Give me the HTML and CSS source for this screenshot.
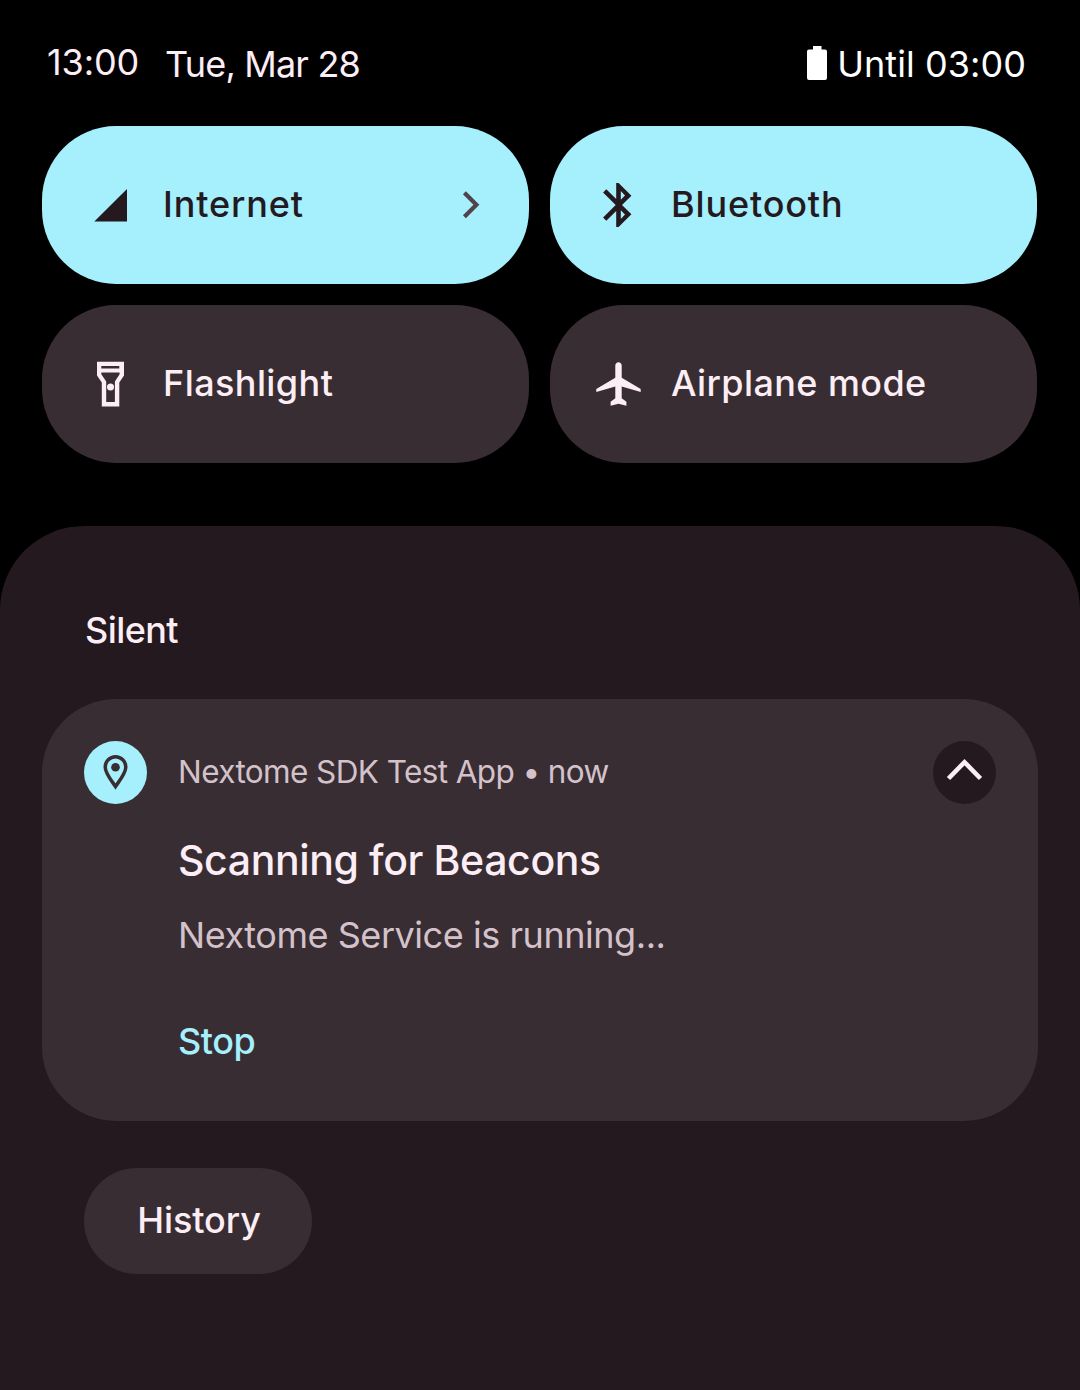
FILE: index.html
```html
<!DOCTYPE html>
<html lang="en">
<head>
<meta charset="utf-8">
<title>Notification shade</title>
<link rel="stylesheet" href="styles.css">
</head>
<body>
<main class="shade">
  <header class="status">
    <span class="clock">13:00</span>
    <span class="date">Tue, Mar 28</span>
    <svg class="battery" width="20" height="34" viewBox="0 0 20 34"><path fill="#fff" d="M6 0h8.500v3.600H18a2 2 0 0 1 2 2V32a2 2 0 0 1-2 2H2a2 2 0 0 1-2-2V5.600a2 2 0 0 1 2-2h4z"/></svg>
    <span class="until">Until 03:00</span>
  </header>

  <section class="tiles">
    <div class="tile on">
      <svg class="tile-icon" viewBox="0 0 48 48"><path fill="currentColor" d="M8.300 40.600 41 8v32.600z"/></svg>
      <span class="label internet">Internet</span>
      <svg class="more" width="20" height="30" viewBox="0 0 20 30"><path fill="none" stroke="#50434a" stroke-width="4.200" d="M3.400 2.700 15.400 14.700 3.400 26.700"/></svg>
    </div>
    <div class="tile on">
      <svg class="tile-icon" viewBox="0 0 48 48"><path fill="currentColor" fill-rule="evenodd" d="M22.200 2h2.400L37.400 14.700 28 24 37.400 33.300 24.600 46h-2.400V29.900L12.300 39.800 9.100 36.600 21.700 24 9.100 11.400l3.200-3.200 9.900 9.900zM26.800 10.100v8.600l4.200-4.200zM26.800 29.300v8.600l4.200-4.400z"/></svg>
      <span class="label bluetooth">Bluetooth</span>
    </div>
    <div class="tile">
      <svg class="tile-icon" viewBox="0 0 48 48"><path fill="currentColor" fill-rule="evenodd" d="M11 1.700h27V15.400l-4.700 7.200V46.400H15.800V22.600L11 15.400zM15.300 6.100v2.300h18V6.100zM15.300 12.400v1.800l4.900 7.300V41.900h8.700V21.500l4.700-7.300v-1.800z"/><circle cx="24.500" cy="27" r="3.500" fill="currentColor"/></svg>
      <span class="label flashlight">Flashlight</span>
    </div>
    <div class="tile">
      <svg class="tile-icon" viewBox="0 0 48 48"><path fill="currentColor" d="M24.500 2.300c1.800 0 3.200 1.400 3.200 3.200v12.200l19 11.300v3.100l-19-5.600V38.300l4.700 3.400v4l-7.900-2-7.900 2v-4l4.700-3.400V26.500l-19 5.600V29l19-11.300V5.500c0-1.800 1.400-3.200 3.200-3.200z"/></svg>
      <span class="label airplane">Airplane mode</span>
    </div>
  </section>

  <section class="panel">
    <h2 class="group">Silent</h2>
    <article class="card">
      <div class="badge">
        <svg width="63" height="63" viewBox="0 0 63 63"><path fill="none" stroke="#382d33" stroke-width="3.500" d="M31.500 45.500C27.500 39.500 21.200 32.500 21.200 26a10.300 10.300 0 0 1 20.600 0C41.800 32.500 35.500 39.500 31.500 45.500z"/><circle cx="31.500" cy="26.300" r="4.300" fill="#382d33"/></svg>
      </div>
      <div class="content">
        <p class="app">Nextome SDK Test App • now</p>
        <h3 class="title">Scanning for Beacons</h3>
        <p class="text">Nextome Service is running...</p>
        <a class="action">Stop</a>
      </div>
      <div class="collapse">
        <svg width="63" height="63" viewBox="0 0 63 63"><path fill="none" stroke="#fdeef5" stroke-width="4.600" d="M15.500 37.500 31.500 21.200l16 16.300"/></svg>
      </div>
    </article>
    <button class="history">History</button>
  </section>
</main>
</body>
</html>
```
FILE: styles.css
```css
* { box-sizing: border-box; margin: 0; padding: 0; }

body {
  background: #000;
  color: #fdeef5;
  font: 400 36px/44px Inter, sans-serif;
}

.shade { width: 1080px; height: 1390px; display: flex; flex-direction: column; overflow: hidden; }

span, p, h2, h3 { white-space: nowrap; }

/* Status bar */
.status { height: 126px; padding: 40px 54px 0 47px; display: flex; align-items: flex-start; }
.clock { width: 118px; letter-spacing: -0.1px; }
.date { padding-top: 2px; letter-spacing: -0.82px; }
.battery { margin: 6px 10px 0 auto; }
.until { padding-top: 2px; color: #fff; letter-spacing: 0.06px; }

/* Quick settings */
.tiles { display: grid; grid-template-columns: 487px 487px; grid-auto-rows: 158px; gap: 21px; padding-left: 42px; }
.tile { display: flex; align-items: center; border-radius: 74px; background: #382d33; padding: 0 48px 0 44px; }
.tile.on { background: #a6effc; color: #23191e; }
.tile-icon { width: 48px; height: 48px; margin: 0 29px 1px 0; flex: none; }
.label { font-weight: 500; padding-bottom: 2px; }
.more { margin-left: auto; }
.internet { letter-spacing: 0.87px; }
.bluetooth { letter-spacing: 0.85px; }
.flashlight { letter-spacing: 0.42px; }
.airplane { letter-spacing: 0.4px; }

/* Notifications */
.panel {
  flex: 1;
  margin-top: 63px;
  padding: 82px 42px 0;
  background: #23191e;
  border-radius: 84px 84px 0 0;
}
.group { font-size: 36px; font-weight: 500; padding-left: 43px; letter-spacing: -0.58px; }
.card {
  display: flex;
  align-items: flex-start;
  height: 422px;
  margin-top: 47px;
  padding: 42px;
  border-radius: 74px;
  background: #382d33;
}
.badge, .collapse { width: 63px; height: 63px; border-radius: 50%; flex: none; }
.badge { background: #a6effc; }
.collapse { background: #23191e; }
.badge svg, .collapse svg { display: block; }
.content { flex: 1; padding: 9px 0 0 31px; }
.app { font-size: 31.5px; color: #d4c2ca; letter-spacing: -0.6px; }
.title { font-size: 41px; font-weight: 500; margin-top: 44px; letter-spacing: -0.38px; }
.text { margin-top: 31px; color: #d4c2ca; letter-spacing: -0.45px; }
.action { display: block; margin-top: 62px; font-weight: 500; color: #a6effc; letter-spacing: -0.46px; }
.history {
  display: block;
  width: 228px;
  height: 106px;
  margin: 47px 0 0 42px;
  padding: 0 0 2px 2px;
  border: 0;
  border-radius: 53px;
  background: #382d33;
  color: inherit;
  font: inherit;
  font-weight: 500;
  letter-spacing: -0.07px;
}
```
